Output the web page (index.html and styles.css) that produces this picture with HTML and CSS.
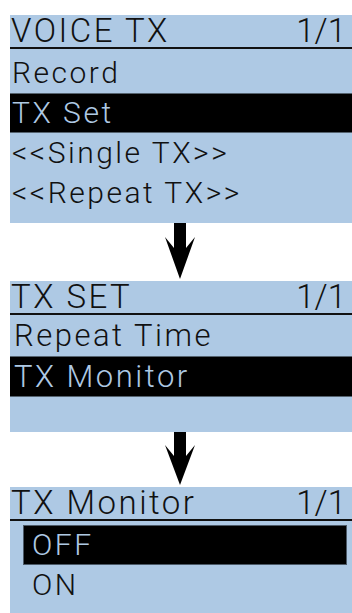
FILE: index.html
```html
<!DOCTYPE html>
<html lang="en">
<head>
  <meta charset="UTF-8" />
  <meta name="viewport" content="width=device-width, initial-scale=1.0">
  <title>Voice TX menu</title>
  <link rel="stylesheet" href="styles.css">
</head>
<body>
  <!-- Step 1: VOICE TX menu -->
  <div class="screen screen-voice">
    <div class="screen-head">
      <span class="screen-title">VOICE TX</span>
      <span class="screen-page">1/1</span>
    </div>
    <ul class="menu">
      <li>Record</li>
      <li class="selected">TX Set</li>
      <li>&lt;&lt;Single TX&gt;&gt;</li>
      <li>&lt;&lt;Repeat TX&gt;&gt;</li>
    </ul>
  </div>

  <div class="step-arrow arrow-first">
    <svg width="30" height="56" viewBox="0 0 30 56">
      <polygon points="9,0 21,0 21,25 30,14 15,56 0,14 9,25" fill="#000" />
    </svg>
  </div>

  <!-- Step 2: TX SET menu -->
  <div class="screen screen-set">
    <div class="screen-head">
      <span class="screen-title">TX SET</span>
      <span class="screen-page">1/1</span>
    </div>
    <ul class="menu">
      <li>Repeat Time</li>
      <li class="selected">TX Monitor</li>
      <li class="empty"></li>
    </ul>
  </div>

  <div class="step-arrow arrow-second">
    <svg width="30" height="53" viewBox="0 0 30 53">
      <polygon points="9,0 21,0 21,24 30,13 15,53 0,13 9,24" fill="#000" />
    </svg>
  </div>

  <!-- Step 3: TX Monitor options -->
  <div class="screen screen-monitor">
    <div class="screen-head">
      <span class="screen-title">TX Monitor</span>
      <span class="screen-page">1/1</span>
    </div>
    <ul class="options">
      <li class="selected">OFF</li>
      <li>ON</li>
    </ul>
  </div>
</body>
</html>
```

FILE: styles.css
```css
/* Reset and base */
* {
  margin: 0;
  padding: 0;
  box-sizing: border-box;
}

body {
  width: 352px;
  padding-top: 15px;
  background: #fff;
  color: #111;
  font-family: Roboto, 'Liberation Sans', Arial, sans-serif;
  font-weight: 300;
  overflow: hidden;
}

ul {
  list-style: none;
}

/* LCD screens */
.screen {
  margin-left: 10px;
  background: #aec9e4;
}

.screen-head {
  display: flex;
  justify-content: space-between;
  height: 34px;
  padding: 0 6px 0 1px;
  border-bottom: 2px solid #111;
  font-size: 33px;
  line-height: 32px;
}

.screen-title {
  letter-spacing: 2.5px;
}

.screen-page {
  letter-spacing: 0;
}

.menu li {
  height: 40px;
  padding-left: 2px;
  font-size: 30px;
  line-height: 40px;
  letter-spacing: 2.5px;
  white-space: nowrap;
}

.menu li.selected {
  background: #000;
  color: #aec9e4;
  box-shadow: inset 0 1px 0 #55636f, inset 0 -1px 0 #55636f;
}

.screen-voice .menu {
  padding: 4px 0 10px;
}

.screen-set .menu li {
  height: 41px;
  padding-left: 4px;
  font-size: 31px;
  line-height: 41px;
}

.screen-set .menu li.empty {
  height: 35px;
}

.options {
  padding: 4px 5px 8px 13px;
}

.options li {
  height: 40px;
  padding-left: 8px;
  border: 1px solid transparent;
  font-size: 30px;
  line-height: 38px;
  letter-spacing: 2.5px;
}

.options li.selected {
  background: #000;
  color: #aec9e4;
  border-color: #4c5a68;
}

/* Arrows between steps */
.step-arrow {
  display: flex;
  padding-left: 165px;
}

.arrow-first {
  height: 58px;
}

.arrow-second {
  height: 55px;
}
```
